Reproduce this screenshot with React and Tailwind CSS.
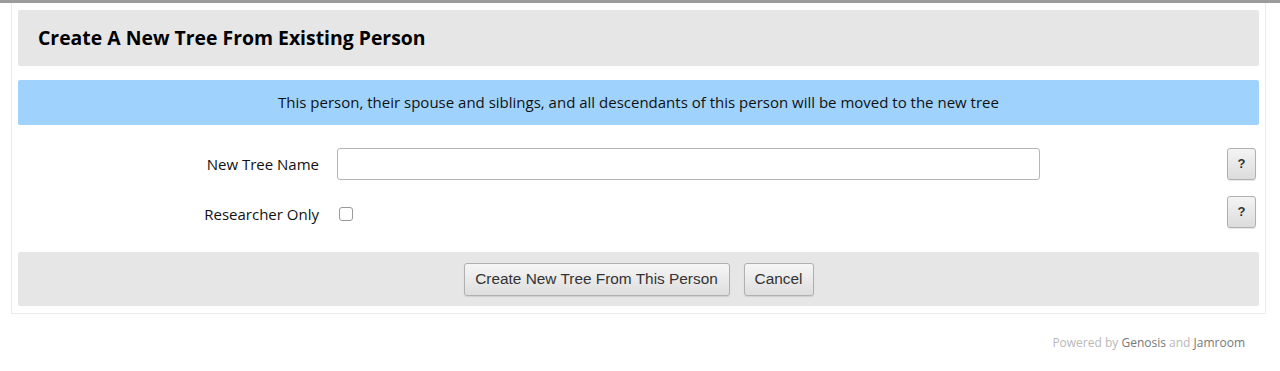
import React from 'react';

export default function App() {
    return (
        <div className="min-h-[371px] bg-white font-['Open_Sans',sans-serif] text-[#111]">
            <div className="h-[3px] bg-[#9b9b9b]"></div>
            <div className="pl-[11px] pr-[14px]">
                <div className="border-x border-b border-[#ebebeb] px-[6px] pt-[7px] pb-[7px]">
                    <div className="h-[56px] bg-[#e6e6e6] rounded-[2px] flex items-center px-[20px]">
                        <h1 className="text-[19.4px] font-bold text-black">Create A New Tree From Existing Person</h1>
                    </div>
                    <div className="mt-[14px] h-[45px] bg-[#9fd3fd] rounded-[2px] flex items-center justify-center text-[15px] text-[#111]">
                        This person, their spouse and siblings, and all descendants of this person will be moved to the new tree
                    </div>
                    <div className="mt-[21px] flex items-center h-[36px]">
                        <label className="w-[301px] text-right text-[15px]">New Tree Name</label>
                        <input type="text" className="ml-[18px] w-[703px] h-[32px] border border-[#b5b5b5] rounded-[3px] bg-white" />
                        <div className="flex-1"></div>
                        <button className="mr-[3px] w-[29px] h-[32px] border border-[#b0b0b0] rounded-[3px] bg-gradient-to-b from-[#f4f4f4] to-[#dcdcdc] text-[13px] font-bold text-[#333] shadow-[0_1px_1px_rgba(0,0,0,0.1)] font-['Liberation_Sans',sans-serif]">?</button>
                    </div>
                    <div className="mt-[14px] flex items-center h-[32px]">
                        <div className="flex items-center mt-[4px]">
                            <label className="w-[301px] text-right text-[15px]">Researcher Only</label>
                            <span className="ml-[20px] w-[14px] h-[14px] border border-[#9a9a9a] rounded-[3px] bg-white"></span>
                        </div>
                        <div className="flex-1"></div>
                        <button className="mr-[3px] w-[29px] h-[32px] border border-[#b0b0b0] rounded-[3px] bg-gradient-to-b from-[#f4f4f4] to-[#dcdcdc] text-[13px] font-bold text-[#333] shadow-[0_1px_1px_rgba(0,0,0,0.1)] font-['Liberation_Sans',sans-serif]">?</button>
                    </div>
                    <div className="mt-[24px] h-[54px] bg-[#e6e6e6] rounded-[2px] flex items-center justify-center gap-[14px] font-['Liberation_Sans',sans-serif]">
                        <button className="h-[33px] w-[266px] border border-[#b0b0b0] rounded-[3px] bg-gradient-to-b from-[#f6f6f6] to-[#dedede] text-[15.4px] text-[#333] shadow-[0_1px_1px_rgba(0,0,0,0.1)]">Create New Tree From This Person</button>
                        <button className="h-[33px] w-[70px] border border-[#b0b0b0] rounded-[3px] bg-gradient-to-b from-[#f6f6f6] to-[#dedede] text-[15.4px] text-[#333] shadow-[0_1px_1px_rgba(0,0,0,0.1)]">Cancel</button>
                    </div>
                </div>
            </div>
            <div className="mt-[20px] pr-[35px] text-right text-[12px] text-[#b8b8b8]">
                Powered by <span className="text-[#777]">Genosis</span> and <span className="text-[#777]">Jamroom</span>
            </div>
        </div>
    );
}
